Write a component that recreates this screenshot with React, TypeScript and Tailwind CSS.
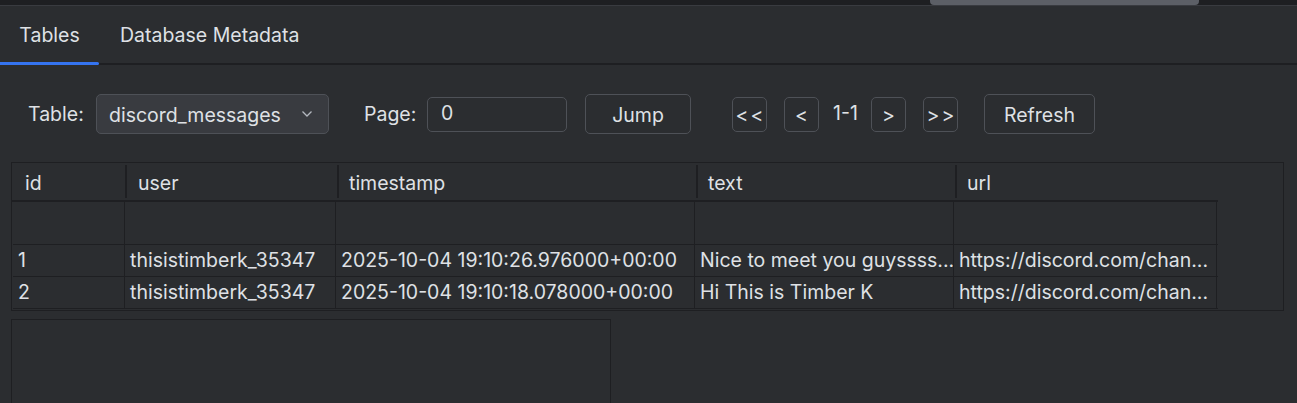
import React from "react";

const font = { fontFamily: "Inter, 'Noto Sans', sans-serif" };

function Btn({ children, w, h = "h-[40px]" }: { children: React.ReactNode; w: string; h?: string }) {
  return (
    <div className={`${w} ${h} shrink-0 flex items-center justify-center rounded-[5px] border border-[#4e5157] text-[#dfe1e5] pt-[3px]`}>
      {children}
    </div>
  );
}

const cols = [
  { name: "id", w: "w-[112px]", pl: "pl-[12px]" },
  { name: "user", w: "w-[212px]", pl: "pl-[13px]" },
  { name: "timestamp", w: "w-[359px]", pl: "pl-[12px]" },
  { name: "text", w: "w-[259px]", pl: "pl-[12px]" },
  { name: "url", w: "w-[263px]", pl: "pl-[12px]" },
];
const bodyW = ["w-[112px]", "w-[211px]", "w-[359px]", "w-[259px]", "w-[263px]"];

const rows = [
  ["", "", "", "", ""],
  ["1", "thisistimberk_35347", "2025-10-04 19:10:26.976000+00:00", "Nice to meet you guyssss...", "https://discord.com/chan..."],
  ["2", "thisistimberk_35347", "2025-10-04 19:10:18.078000+00:00", "Hi This is Timber K", "https://discord.com/chan..."],
];

export default function App() {
  return (
    <div className="w-[1297px] h-[403px] overflow-hidden bg-[#2b2d30] text-[#dfe1e5] text-[19.5px]" style={font}>
      {/* top strip */}
      <div className="h-[5px] bg-[#1e1f22] relative">
        <div className="absolute left-[930px] top-0 w-[269px] h-[5px] bg-[#5c5f66] rounded-b-[4px]" />
      </div>
      <div className="h-px bg-[#393b40]" />
      {/* tabs */}
      <div className="h-[59px] flex items-stretch border-b-2 border-[#1e1f22] relative">
        <div className="w-[99px] flex items-center justify-center relative">
          <span className="pt-[2px]">Tables</span>
          <div className="absolute left-0 right-0 -bottom-[2px] h-[3px] bg-[#3574f0] rounded-r-[2px]" />
        </div>
        <div className="pl-[21px] flex items-center">
          <span className="pt-[2px]">Database Metadata</span>
        </div>
      </div>
      {/* controls */}
      <div className="flex items-center mt-[29px] h-[40px] whitespace-nowrap">
        <span className="ml-[28px] w-[68px] shrink-0 pt-[2px]">Table:</span>
        <div className="w-[233px] shrink-0 h-[40px] rounded-[5px] border border-[#4e5157] bg-[#393b40] flex items-center pl-[12px] pr-[15px] justify-between">
          <span className="pt-[3px]">discord_messages</span>
          <svg width="12" height="8" viewBox="0 0 12 8" fill="none">
            <path d="M1.5 1.5 L6 6 L10.5 1.5" stroke="#b4b8bf" strokeWidth="1.3" />
          </svg>
        </div>
        <span className="ml-[35px] w-[63px] shrink-0 pt-[2px]">Page:</span>
        <div className="w-[140px] shrink-0 h-[35px] rounded-[5px] border border-[#4e5157] flex items-center pl-[13px]">
          <span>0</span>
        </div>
        <div className="ml-[18px]"><Btn w="w-[106px]">Jump</Btn></div>
        <div className="ml-[41px]"><Btn w="w-[35px]" h="h-[35px]"><span className="tracking-[2px] pl-[2px]">&lt;&lt;</span></Btn></div>
        <div className="ml-[17px]"><Btn w="w-[35px]" h="h-[35px]"><span>&lt;</span></Btn></div>
        <span className="ml-[14px] w-[38px] shrink-0">1-1</span>
        <div><Btn w="w-[35px]" h="h-[35px]"><span>&gt;</span></Btn></div>
        <div className="ml-[17px]"><Btn w="w-[35px]" h="h-[35px]"><span className="tracking-[2px] pl-[2px]">&gt;&gt;</span></Btn></div>
        <div className="ml-[26px]"><Btn w="w-[111px]">Refresh</Btn></div>
      </div>
      {/* table */}
      <div className="ml-[11px] mt-[28px] w-[1273px] border border-[#1e1f22] pb-[1px]">
        <div className="flex h-[39px] pl-[1px] border-b-2 border-[#1e1f22] w-[1206px]">
          {cols.map((c, i) => (
            <div key={c.name} className={`${c.w} ${c.pl} shrink-0 flex items-center pt-[4px] relative`}>
              {i > 0 && <div className="absolute left-0 top-[2px] bottom-[2px] w-[2px] bg-[#1e1f22]" />}
              <span>{c.name}</span>
            </div>
          ))}
        </div>
        <div className="pl-[1px] w-[1206px]">
          {rows.map((r, ri) => (
            <div key={ri} className={`flex ${ri === 0 ? "h-[43px]" : "h-[32px]"} border-b border-[#1e1f22]`}>
              {r.map((v, ci) => (
                <div key={ci} className={`${bodyW[ci]} shrink-0 flex items-center pl-[5px] whitespace-nowrap overflow-hidden border-r border-[#1e1f22]`}>
                  {v}
                </div>
              ))}
            </div>
          ))}
        </div>
      </div>
      {/* lower empty panel */}
      <div className="ml-[11px] mt-[8px] w-[600px] h-[100px] border border-[#1e1f22]" />
    </div>
  );
}
